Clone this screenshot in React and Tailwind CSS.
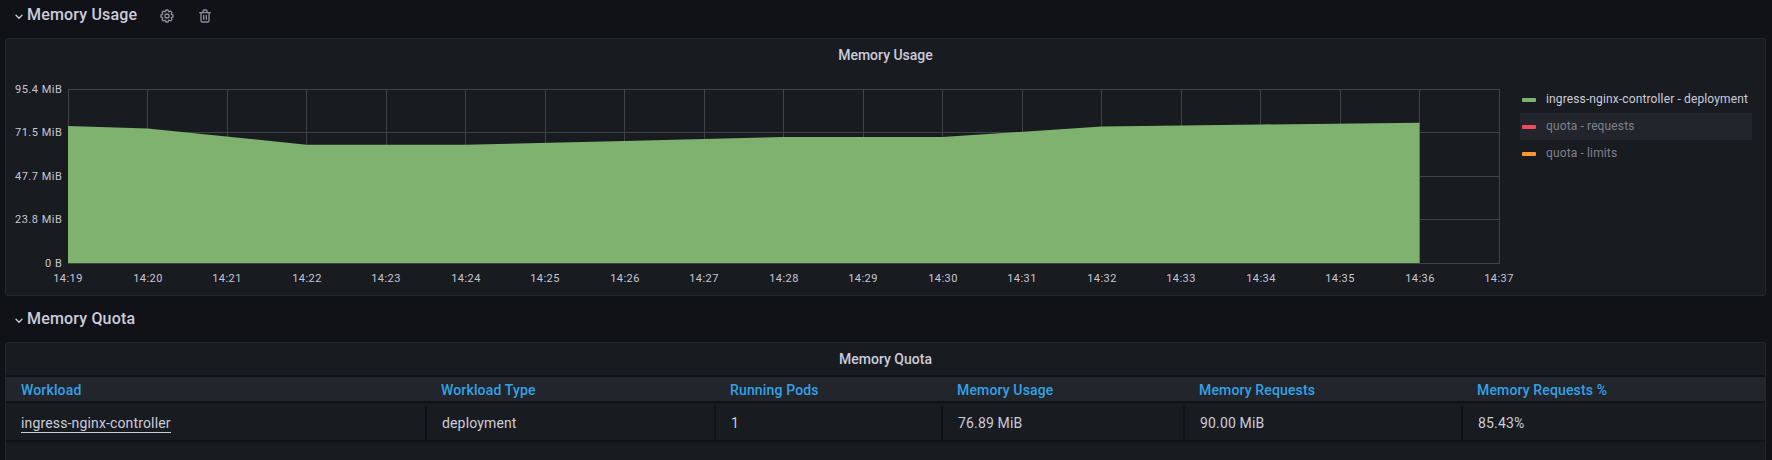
import React from "react";

const X0 = 68;
const STEP = 79.5;
const Y0 = 89;
const yTicks = ["95.4 MiB", "71.5 MiB", "47.7 MiB", "23.8 MiB", "0 B"];
const xTicks = Array.from({ length: 19 }, (_, i) => `14:${19 + i}`);
const area = "68,126 147.5,128.5 306.5,144.7 465.5,144.7 624.5,141 783.5,137 942.5,137 1101.5,126.5 1260.5,124.5 1419.5,122.7 1419.5,263 68,263";

function Chart() {
  return (
    <svg width="1512" height="224" viewBox="6 71 1512 224" className="block shrink-0 text-[11px]" fontFamily="Roboto, sans-serif">
      <g fill="#404246">
        {xTicks.map((t, i) => (
          <rect key={t} x={Math.floor(X0 + i * STEP)} y="89" width="1" height="175" />
        ))}
        {yTicks.map((t, i) => (
          <rect key={t} x="68" y={Math.floor(Y0 + i * 43.5)} width="1432" height="1" />
        ))}
      </g>
      <polygon points={area} fill="#7fb26e" />
      <g fill="#c7c8d6">
        {yTicks.map((t, i) => (
          <text key={t} x="62.3" y={Math.floor(Y0 + i * 43.5) + 4} textAnchor="end" letterSpacing="0.5">{t}</text>
        ))}
        {xTicks.map((t, i) => (
          <text key={t} x={Math.round(X0 + i * STEP)} y="282" textAnchor="middle" letterSpacing="0.42">{t}</text>
        ))}
      </g>
    </svg>
  );
}

function Chevron() {
  return (
    <svg width="8" height="6" viewBox="0 0 8 6" className="mt-[3px] shrink-0" fill="none" stroke="#ccccdc" strokeWidth="1.3" strokeLinecap="round" strokeLinejoin="round">
      <path d="M1 1.2 4 4.2 7 1.2" />
    </svg>
  );
}

function Gear() {
  return (
    <svg width="16" height="16" viewBox="0 0 24 24" fill="#8e8e9a">
      <path d="M21.32,9.55l-1.89-.63.89-1.78A1,1,0,0,0,20.13,6L18,3.87a1,1,0,0,0-1.15-.19l-1.78.89-.63-1.89A1,1,0,0,0,13.5,2h-3a1,1,0,0,0-.95.68L8.92,4.57,7.14,3.68A1,1,0,0,0,6,3.87L3.87,6a1,1,0,0,0-.19,1.15l.89,1.78-1.89.63A1,1,0,0,0,2,10.5v3a1,1,0,0,0,.68.95l1.89.63-.89,1.78A1,1,0,0,0,3.87,18L6,20.13a1,1,0,0,0,1.15.19l1.78-.89.63,1.89a1,1,0,0,0,.95.68h3a1,1,0,0,0,.95-.68l.63-1.89,1.78.89A1,1,0,0,0,18,20.13L20.13,18a1,1,0,0,0,.19-1.15l-.89-1.78,1.89-.63A1,1,0,0,0,22,13.5v-3A1,1,0,0,0,21.32,9.55ZM20,12.78l-1.2.4A2,2,0,0,0,17.64,16l.57,1.14-1.1,1.1L16,17.64a2,2,0,0,0-2.79,1.16l-.4,1.2H11.22l-.4-1.2A2,2,0,0,0,8,17.64l-1.14.57-1.1-1.1L6.36,16A2,2,0,0,0,5.2,13.18L4,12.78V11.22l1.2-.4A2,2,0,0,0,6.36,8L5.79,6.89l1.1-1.1L8,6.36A2,2,0,0,0,10.82,5.2l.4-1.2h1.56l.4,1.2A2,2,0,0,0,16,6.36l1.14-.57,1.1,1.1L17.64,8a2,2,0,0,0,1.16,2.79l1.2.4ZM12,8a4,4,0,1,0,4,4A4,4,0,0,0,12,8Zm0,6a2,2,0,1,1,2-2A2,2,0,0,1,12,14Z" />
    </svg>
  );
}

function Trash() {
  return (
    <svg width="16" height="16" viewBox="0 0 24 24" fill="#8e8e9a">
      <path d="M10,18a1,1,0,0,0,1-1V11a1,1,0,0,0-2,0v6A1,1,0,0,0,10,18ZM20,6H16V5a3,3,0,0,0-3-3H11A3,3,0,0,0,8,5V6H4A1,1,0,0,0,4,8H5V19a3,3,0,0,0,3,3h8a3,3,0,0,0,3-3V8h1a1,1,0,0,0,0-2ZM10,5a1,1,0,0,1,1-1h2a1,1,0,0,1,1,1V6H10Zm7,14a1,1,0,0,1-1,1H8a1,1,0,0,1-1-1V8H17Zm-3-1a1,1,0,0,0,1-1V11a1,1,0,0,0-2,0v6A1,1,0,0,0,14,18Z" />
    </svg>
  );
}

function RowTitle({ children }) {
  return (
    <div className="flex items-center gap-1">
      <Chevron />
      <h2 className="text-base leading-6 font-medium tracking-[0.17px]">{children}</h2>
    </div>
  );
}

function PanelTitle({ children }) {
  return <h3 className="h-8 text-center text-sm leading-8 font-medium">{children}</h3>;
}

const legend = [
  { label: "ingress-nginx-controller - deployment", dot: "bg-[#7eb26d]", row: "" },
  { label: "quota - requests", dot: "bg-[#f2495c]", row: "bg-[#22252b] text-[#7f808b]" },
  { label: "quota - limits", dot: "bg-[#ff9830]", row: "text-[#7f808b]" },
];

const columns = [
  { head: "Workload", value: "ingress-nginx-controller", w: "w-[421px]", headPad: "pl-[15px]", link: true },
  { head: "Workload Type", value: "deployment", w: "w-[289px]", headPad: "pl-[14px]" },
  { head: "Running Pods", value: "1", w: "w-[227px]", headPad: "pl-[14px]" },
  { head: "Memory Usage", value: "76.89 MiB", w: "w-[242px]", headPad: "pl-[14px]" },
  { head: "Memory Requests", value: "90.00 MiB", w: "w-[278px]", headPad: "pl-[14px]" },
  { head: "Memory Requests %", value: "85.43%", w: "flex-1", headPad: "pl-[14px]", last: true },
];

export default function App() {
  return (
    <div className="h-[460px] w-[1772px] overflow-hidden bg-[#111217] pl-[5px] font-[Roboto,sans-serif] text-[#ccccdc]">
      <div className="flex h-[38px] items-start pt-[3px] pl-[10px]">
        <RowTitle>Memory Usage</RowTitle>
        <div className="mt-[5px] ml-[22px] flex gap-[22px]">
          <Gear />
          <Trash />
        </div>
      </div>
      <section className="h-[258px] w-[1761px] rounded-[3px] border border-[#25272c] bg-[#181b1f]">
        <PanelTitle>Memory Usage</PanelTitle>
        <div className="flex">
          <Chart />
          <ul className="mt-[15px] ml-[2px] w-[232px] text-xs tracking-[0.13px]">
            {legend.map((l) => (
              <li key={l.label} className={`flex h-[27px] items-center pl-[2px] ${l.row}`}>
                <span className={`mt-px mr-[10px] h-1 w-[14px] rounded-[1px] ${l.dot}`} />
                <span className="-mt-[2px]">{l.label}</span>
              </li>
            ))}
          </ul>
        </div>
      </section>
      <div className="flex h-[46px] items-start pt-[11px] pl-[10px]">
        <RowTitle>Memory Quota</RowTitle>
      </div>
      <section className="h-[130px] w-[1761px] rounded-[3px] border border-[#25272c] bg-[#181b1f] text-sm">
        <PanelTitle>Memory Quota</PanelTitle>
        <div className="flex h-7 items-center border-y-2 border-[#111217] bg-[#22252b] pt-[2px] font-medium tracking-[0.15px] text-[#33a2e5]">
          {columns.map((c) => (
            <div key={c.head} className={`${c.headPad} ${c.w}`}>{c.head}</div>
          ))}
        </div>
        <div className="flex h-[39px] border-b-2 border-[#111217] pt-[3px] tracking-[0.15px]">
          {columns.map((c) => (
            <div key={c.head} className={`flex items-center border-[#111217] pl-[15px] ${c.w} ${c.last ? "" : "border-r-2"}`}>
              <span className={c.link ? "border-b border-[#ccccdc] leading-[18px]" : ""}>{c.value}</span>
            </div>
          ))}
        </div>
      </section>
    </div>
  );
}
